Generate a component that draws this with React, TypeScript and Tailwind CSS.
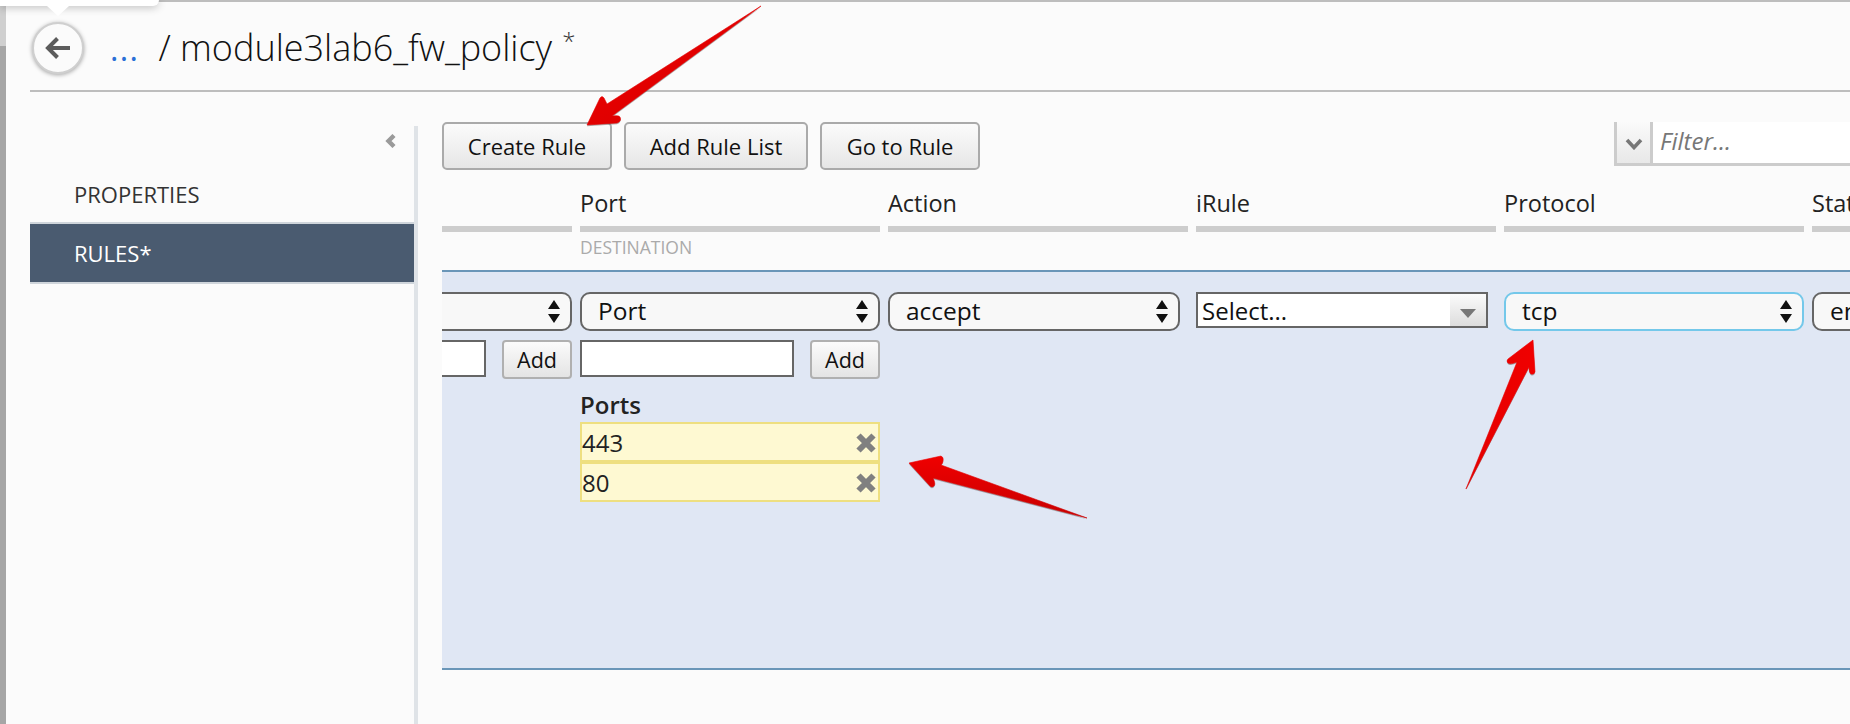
import React from "react";

function UpDown() {
  return (
    <svg width="12" height="23" viewBox="0 0 12 23" className="shrink-0">
      <path d="M6 0 L12 9 L0 9 Z M0 14 L12 14 L6 23 Z" fill="#111" />
    </svg>
  );
}

function Select({ label, focus, className }: { label?: string; focus?: boolean; className?: string }) {
  return (
    <div
      className={
        "h-[39px] flex items-center justify-between pl-[16px] pr-[10px] rounded-[10px] border-2 bg-[#f8f8f8] text-[24.5px] text-[#111] " +
        (focus ? "border-[#74c8ea] " : "border-[#666] ") +
        (className ?? "")
      }
    >
      <span>{label}</span>
      <UpDown />
    </div>
  );
}

function AddRow({ inputClass }: { inputClass: string }) {
  return (
    <div className="mt-[9px] flex items-start justify-between">
      <input className={"h-[37px] bg-white border-2 border-[#666] outline-none " + inputClass} />
      <button className="h-[39px] w-[70px] rounded-[4px] border-2 border-[#b0b0b0] bg-gradient-to-b from-[#fbfbfb] to-[#e4e4e4] text-[21.5px] text-[#111] leading-none">
        Add
      </button>
    </div>
  );
}

function ToolButton({ children, className }: { children: React.ReactNode; className: string }) {
  return (
    <button
      className={
        "h-[48px] shrink-0 rounded-[5px] border-2 border-[#aaa] bg-gradient-to-b from-[#fbfbfb] to-[#e6e6e6] text-[22px] text-[#111] " +
        className
      }
    >
      {children}
    </button>
  );
}

function ColHead({ label, sub, className }: { label?: string; sub?: string; className: string }) {
  return (
    <div className={"shrink-0 " + className}>
      <div className="h-[56px] flex items-end pb-[8px] text-[23.5px] leading-[30px] text-[#222]">{label}</div>
      <div className="h-[6px] bg-[#cdcdcd]" />
      <div className="h-[38px] pt-[5px] text-[17.5px] leading-[20px] text-[#aaaaaa]">{sub}</div>
    </div>
  );
}

function PortItem({ value }: { value: string }) {
  return (
    <div className="h-[40px] flex items-center justify-between border-2 border-[#eedf80] bg-[#fef9d2] pr-[2px] text-[24px] text-[#222]">
      <span className="pt-[2px]">{value}</span>
      <svg width="20" height="20" viewBox="0 0 20 20" className="mt-[2px]">
        <path d="M2.5 2.5 L17.5 17.5 M17.5 2.5 L2.5 17.5" stroke="#808080" strokeWidth="6" />
      </svg>
    </div>
  );
}

function Arrow({ d, id }: { d: string; id: string }) {
  return (
    <>
      <path d={d} fill="#555" opacity="0.45" transform="translate(0 1.2)" strokeLinejoin="round" />
      <path d={d} fill={`url(#${id})`} stroke={`url(#${id})`} strokeWidth="0.6" strokeLinejoin="round" />
    </>
  );
}

export default function App() {
  return (
    <div
      className="relative w-[1850px] h-[724px] overflow-hidden flex bg-[#fbfbfb] text-[#222]"
      style={{ fontFamily: '"Open Sans", sans-serif' }}
    >
      <div className="w-[6px] shrink-0 flex flex-col">
        <div className="h-[46px] bg-[#cfcfcf]" />
        <div className="flex-1 bg-[#a6a6a6]" />
      </div>

      <div className="flex-1 min-w-0 flex flex-col border-t-2 border-[#bdbdbd] pl-[24px]">
        <header className="h-[90px] shrink-0 flex items-center border-b-2 border-[#bdbdbd]">
          <div className="w-[52px] h-[52px] mt-[4px] ml-[2px] rounded-full border-2 border-[#cfcfcf] bg-[#fbfbfb] shadow-[0_1px_4px_rgba(0,0,0,0.35)] flex items-center justify-center">
            <svg width="30" height="30" viewBox="0 0 30 30">
              <path d="M27 15 H6 M14.5 5.5 L5 15 L14.5 24.5" fill="none" stroke="#5c5c5c" strokeWidth="4" />
            </svg>
          </div>
          <span className="ml-[26px] mt-[6px] text-[32px] leading-none tracking-[1.4px] text-[#2a6fd6]">...</span>
          <span className="ml-[19px] mt-[4px] text-[36px] font-light text-[#111] leading-none">/ module3lab6_fw_policy</span>
          <span className="ml-[10px] -mt-[11px] text-[24px] font-light text-[#333] leading-none">*</span>
        </header>

        <div className="flex-1 min-h-0 flex pt-[30px]">
          <aside className="w-[388px] shrink-0 mt-[4px] border-r-4 border-[#dfe3e7]">
            <div className="h-[22px] pt-[8px] pr-[18px] flex justify-end">
              <svg width="11" height="14" viewBox="0 0 11 14">
                <path d="M9 1.5 L3.5 7 L9 12.5" fill="none" stroke="#9a9a9a" strokeWidth="4.4" />
              </svg>
            </div>
            <div className="mt-[18px] h-[56px] flex items-center pl-[44px] text-[22px] text-[#333]">PROPERTIES</div>
            <div className="h-[62px] flex items-center pl-[44px] border-y-2 border-[#cfd5db] bg-[#4a5b70] text-[22px] font-medium text-white">
              RULES*
            </div>
          </aside>

          <main className="flex-1 min-w-0 overflow-hidden pl-[24px]">
            <div className="flex items-start">
              <ToolButton className="w-[170px]">Create Rule</ToolButton>
              <ToolButton className="ml-[12px] w-[184px]">Add Rule List</ToolButton>
              <ToolButton className="ml-[12px] w-[160px]">Go to Rule</ToolButton>
              <div className="ml-[634px] -mt-[4px] w-[300px] h-[48px] shrink-0 flex border-[3px] border-[#cccccc] bg-white">
                <div className="w-[36px] shrink-0 flex items-center justify-center border-r-[3px] border-[#cccccc] bg-gradient-to-b from-[#fbfbfb] to-[#e8e8e8]">
                  <svg width="18" height="12" viewBox="0 0 18 12" className="mt-[4px]">
                    <path d="M2 2 L9 9.5 L16 2" fill="none" stroke="#777" strokeWidth="3.6" />
                  </svg>
                </div>
                <input
                  placeholder="Filter..."
                  className="flex-1 min-w-0 pl-[7px] pb-[3px] text-[24px] italic outline-none placeholder:text-[#777]"
                />
              </div>
            </div>

            <div className="flex gap-[8px]">
              <ColHead className="w-[130px]" />
              <ColHead className="w-[300px]" label="Port" sub="DESTINATION" />
              <ColHead className="w-[300px]" label="Action" />
              <ColHead className="w-[300px]" label="iRule" />
              <ColHead className="w-[300px]" label="Protocol" />
              <ColHead className="w-[300px]" label="State" />
            </div>

            <section className="h-[400px] border-y-2 border-[#6a96b8] bg-[#e0e7f4] pt-[20px] flex items-start gap-[8px]">
              <div className="w-[130px] shrink-0">
                <Select className="rounded-l-none border-l-0" />
                <AddRow inputClass="w-[44px] border-l-0" />
              </div>
              <div className="w-[300px] shrink-0">
                <Select label="Port" />
                <AddRow inputClass="w-[214px] pl-1" />
                <div className="mt-[11px] text-[24px] leading-[30px] font-semibold text-[#222]">Ports</div>
                <div className="mt-[2px]">
                  <PortItem value="443" />
                  <PortItem value="80" />
                </div>
              </div>
              <div className="w-[300px] shrink-0">
                <Select label="accept" className="w-[292px]" />
              </div>
              <div className="w-[300px] shrink-0">
                <div className="w-[292px] h-[36px] flex items-stretch border-2 border-[#666] bg-white text-[24px] text-[#111]">
                  <span className="flex-1 pl-[4px] leading-[34px]">Select...</span>
                  <span className="w-[36px] flex items-center justify-center bg-gradient-to-b from-[#fbfbfb] to-[#dddddd] pt-[6px]">
                    <svg width="16" height="9" viewBox="0 0 16 9">
                      <path d="M0 0 H16 L8 9 Z" fill="#777" />
                    </svg>
                  </span>
                </div>
              </div>
              <div className="w-[300px] shrink-0">
                <Select label="tcp" focus />
              </div>
              <div className="w-[300px] shrink-0">
                <Select label="enabled" />
              </div>
            </section>
          </main>
        </div>
      </div>

      <div className="absolute left-0 top-0 w-[159px] h-[6px] bg-white rounded-br-[6px] shadow-[0_1px_8px_rgba(0,0,0,0.3)]" />
      <svg className="absolute left-0 top-0 pointer-events-none" width="1850" height="724">
        <defs>
          <linearGradient id="a1" x1="0" y1="0" x2="1" y2="1">
            <stop offset="0" stopColor="#f50000" />
            <stop offset="1" stopColor="#cf0000" />
          </linearGradient>
          <linearGradient id="a2" x1="0" y1="0" x2="0" y2="1">
            <stop offset="0" stopColor="#f00000" />
            <stop offset="1" stopColor="#c80000" />
          </linearGradient>
          <linearGradient id="a3" x1="0" y1="0" x2="1" y2="0">
            <stop offset="0" stopColor="#e40000" />
            <stop offset="1" stopColor="#f00000" />
          </linearGradient>
        </defs>
        <path d="M47 6 H69 L58 16 Z" fill="#fff" />
        <Arrow id="a1" d="M761 6 L607 104 L604 98 Q602 95 600 98 L587 125 L617 123 Q622 121 620 117 Q619 115 612 116 Z" />
        <Arrow id="a2" d="M909 463 L941 456 Q944 457 943 461 Q943 463 941 465 L1087 518 L933 478 Q936 484 934 486 Q932 488 930 486 Z" />
        <Arrow id="a3" d="M1533 340 L1535 372 Q1534 375 1531 374 Q1529 373 1529 367 L1466 489 L1517 362 Q1510 365 1508 363 Q1506 361 1508 359 Z" />
      </svg>
    </div>
  );
}
